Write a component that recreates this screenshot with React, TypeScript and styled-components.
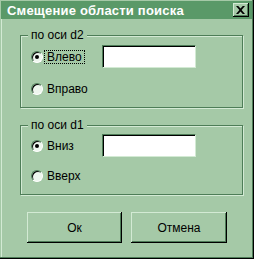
import React from 'react';
import styled, { createGlobalStyle } from 'styled-components';

const FACE = '#a5c9a7';
const TITLE = '#5a9968';
const DARK = '#4e7d58';
const LIGHT = '#d3ead4';

const Global = createGlobalStyle`
  html, body { margin: 0; padding: 0; background: #ffffff; }
  body { font-family: "Liberation Sans", Arial, sans-serif; font-size: 12px; color: #000; }
`;

const Window = styled.div`
  width: 254px;
  height: 259px;
  box-sizing: border-box;
  background: ${FACE};
  padding: 1px 2px 2px 1px;
  box-shadow: inset -1px -1px 0 #000, inset -2px -2px 0 ${DARK}, inset 1px 1px 0 ${FACE}, inset 2px 2px 0 ${LIGHT};
  display: flex;
  flex-direction: column;
`;

const TitleBar = styled.div`
  height: 18px;
  background: ${TITLE};
  display: flex;
  align-items: center;
  justify-content: space-between;
  padding: 0 3px 0 6px;
`;

const TitleText = styled.span`
  color: #fff;
  font-weight: bold;
  font-size: 13px;
  letter-spacing: 0.2px;
`;

const CloseButton = styled.div`
  width: 16px;
  height: 14px;
  box-sizing: border-box;
  background: ${FACE};
  box-shadow: inset -1px -1px 0 #000, inset 1px 1px 0 ${LIGHT}, inset -2px -2px 0 ${DARK};
  display: flex;
  align-items: center;
  justify-content: center;
  padding: 0 1px 1px 0;
`;

const Content = styled.div`
  display: flex;
  flex-direction: column;
  padding-left: 19px;
`;

const Group = styled.div<{ $top: number; $pt: number; $gap: number }>`
  position: relative;
  margin-top: ${p => p.$top}px;
  width: 223px;
  box-sizing: border-box;
  border: 1px solid ${DARK};
  box-shadow: inset 1px 1px 0 ${LIGHT}, 1px 1px 0 ${LIGHT};
  display: grid;
  grid-template-columns: 71px 94px;
  row-gap: ${p => p.$gap}px;
  padding: ${p => p.$pt}px 0 11px 10px;
  align-items: center;
`;

const Legend = styled.span`
  position: absolute;
  top: -8px;
  left: 7px;
  line-height: 14px;
  padding: 0 3px 0 3px;
  background: ${FACE};
`;

const RadioRow = styled.label`
  display: flex;
  align-items: center;
  height: 14px;
`;

const RadioCircle = styled.span<{ $checked: boolean }>`
  width: 12px;
  height: 12px;
  box-sizing: border-box;
  border-radius: 50%;
  background: #eef6ee;
  border: 1px solid;
  border-color: ${DARK} #ffffff #ffffff ${DARK};
  box-shadow: inset 1px 1px 0 #000;
  display: flex;
  align-items: center;
  justify-content: center;
  margin-right: 1px;
  &::after {
    content: '';
    width: 4px;
    height: 4px;
    border-radius: 50%;
    background: ${p => (p.$checked ? '#000' : 'transparent')};
  }
`;

const RadioText = styled.span<{ $focused: boolean }>`
  border: 1px dotted ${p => (p.$focused ? '#000' : 'transparent')};
  padding: 0 2px;
  line-height: 12px;
`;

const TextBox = styled.div`
  width: 94px;
  height: 23px;
  box-sizing: border-box;
  background: #fff;
  border: 1px solid;
  border-color: ${DARK} ${LIGHT} ${LIGHT} ${DARK};
  box-shadow: inset 1px 1px 0 #000;
`;

const ButtonRow = styled.div`
  display: flex;
  gap: 9px;
  margin-top: 17px;
  padding-left: 7px;
`;

const Button = styled.div<{ $w: number }>`
  width: ${p => p.$w}px;
  height: 31px;
  box-sizing: border-box;
  background: ${FACE};
  box-shadow: inset -1px -1px 0 #000, inset 1px 1px 0 ${LIGHT}, inset -2px -2px 0 ${DARK};
  display: flex;
  align-items: center;
  justify-content: center;
  padding-top: 1px;
`;

const Radio = ({ label, checked, focused }: { label: string; checked?: boolean; focused?: boolean }) => (
  <RadioRow>
    <RadioCircle $checked={!!checked} />
    <RadioText $focused={!!focused}>{label}</RadioText>
  </RadioRow>
);

export default function App() {
  return (
    <>
      <Global />
      <Window>
        <TitleBar>
          <TitleText>Смещение области поиска</TitleText>
          <CloseButton>
            <svg width="9" height="8" viewBox="0 0 9 8">
              <path d="M0 0 L2.2 0 L4.5 2.6 L6.8 0 L9 0 L5.6 4 L9 8 L6.8 8 L4.5 5.4 L2.2 8 L0 8 L3.4 4 Z" fill="#000" />
            </svg>
          </CloseButton>
        </TitleBar>
        <Content>
          <Group $top={16} $pt={9} $gap={14}>
            <Legend>по оси d2</Legend>
            <Radio label="Влево" checked focused />
            <TextBox />
            <Radio label="Вправо" />
          </Group>
          <Group $top={17} $pt={8} $gap={12}>
            <Legend>по оси d1</Legend>
            <Radio label="Вниз" checked />
            <TextBox />
            <Radio label="Вверх" />
          </Group>
          <ButtonRow>
            <Button $w={95}>Ок</Button>
            <Button $w={96}>Отмена</Button>
          </ButtonRow>
        </Content>
      </Window>
    </>
  );
}
